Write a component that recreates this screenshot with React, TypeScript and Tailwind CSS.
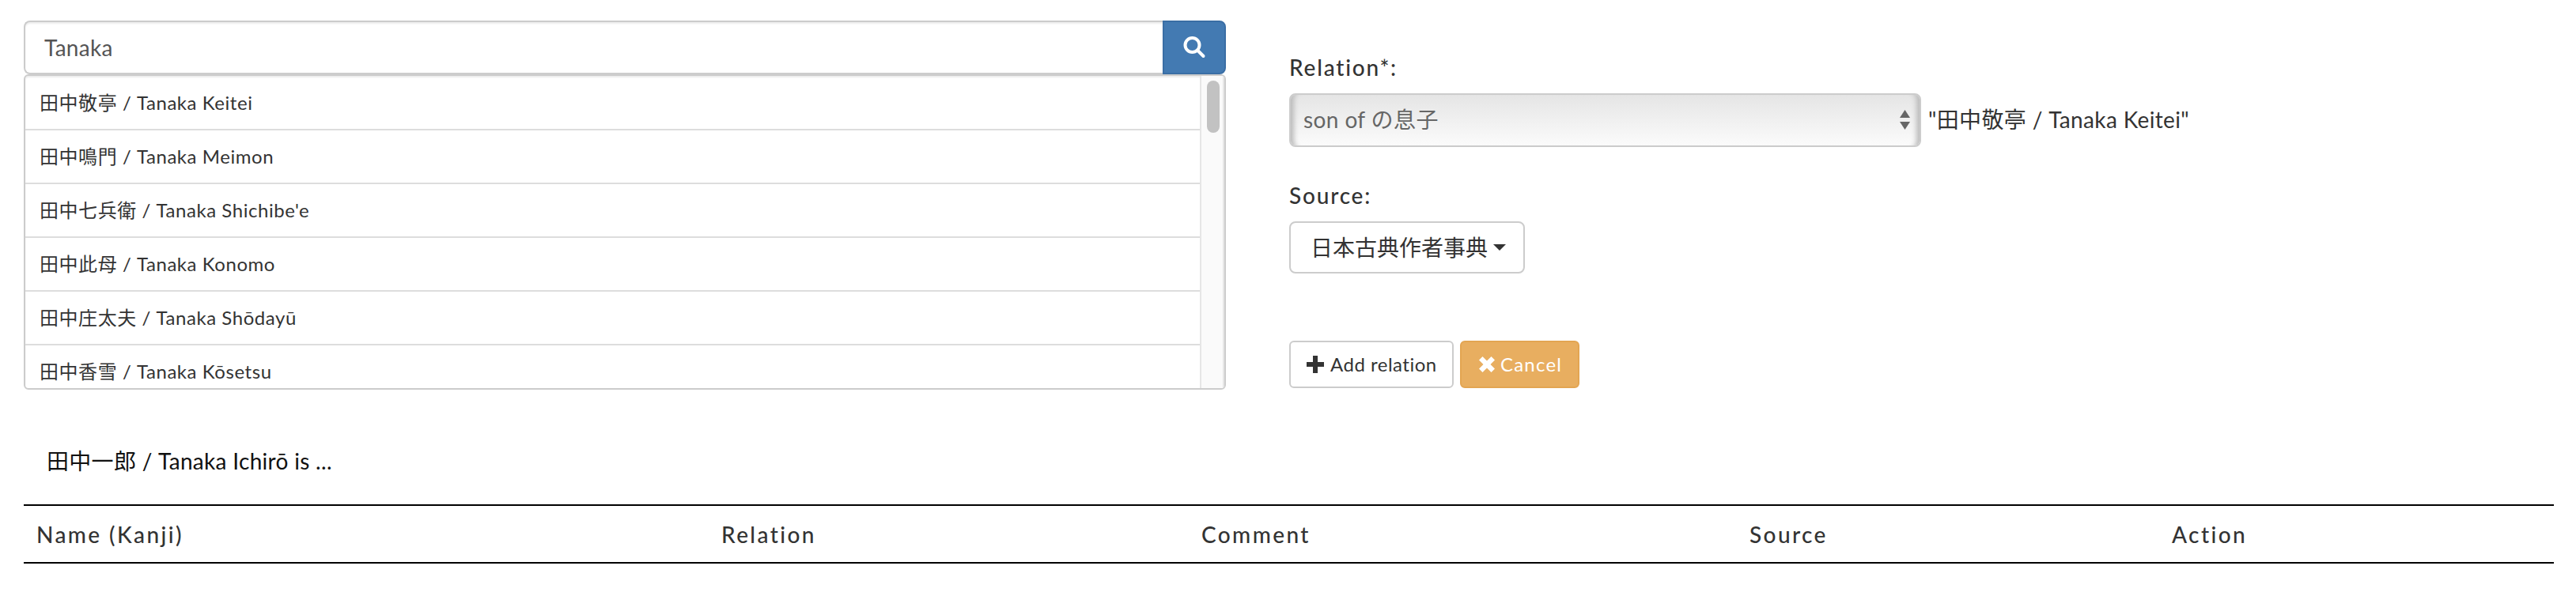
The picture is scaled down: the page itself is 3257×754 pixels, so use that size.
const results = [
  "田中敬亭 / Tanaka Keitei",
  "田中鳴門 / Tanaka Meimon",
  "田中七兵衛 / Tanaka Shichibe'e",
  "田中此母 / Tanaka Konomo",
  "田中庄太夫 / Tanaka Shōdayū",
  "田中香雪 / Tanaka Kōsetsu",
];

const columns = [
  { label: "Name (Kanji)", width: "w-[866px]" },
  { label: "Relation", width: "w-[607px]" },
  { label: "Comment", width: "w-[693px]" },
  { label: "Source", width: "w-[534px]" },
  { label: "Action", width: "w-[499px]" },
];

const SearchIcon = () => (
  <svg width="30" height="30" viewBox="0 0 30 30" fill="none" stroke="white" strokeWidth="4">
    <circle cx="12.5" cy="12" r="9" />
    <path d="M19 18.5L26.5 26" strokeLinecap="round" />
  </svg>
);

const PlusIcon = () => (
  <svg width="22" height="22" viewBox="0 0 22 22" fill="#333">
    <path d="M8 0h6v8h8v6h-8v8H8v-8H0V8h8z" />
  </svg>
);

const CrossIcon = () => (
  <svg width="20" height="20" viewBox="0 0 20 20" fill="white">
    <path d="M4.5 0L10 5.5 15.5 0 20 4.5 14.5 10 20 15.5 15.5 20 10 14.5 4.5 20 0 15.5 5.5 10 0 4.5z" />
  </svg>
);

const SelectArrows = () => (
  <svg width="13" height="25" viewBox="0 0 13 25" fill="#666">
    <path d="M6.5 0L13 10H0z" />
    <path d="M0 15h13L6.5 25z" />
  </svg>
);

const App = () => {
  return (
    <div className="h-[754px] bg-white px-[30px] pt-[26px] font-['Lato','Noto_Sans_CJK_JP',sans-serif] text-[#333]">
      <div className="flex h-[467px] gap-[80px]">
        <div className="w-[1520px] shrink-0">
          <div className="flex h-[68px]">
            <div className="flex flex-1 items-center rounded-l-[8px] border-2 border-r-0 border-[#ccc] pl-[24px] text-[28px] tracking-[0.3px] text-[#555] shadow-[inset_0_2px_2px_rgba(0,0,0,0.08)]">
              Tanaka
            </div>
            <div className="flex w-[80px] items-center justify-center rounded-r-[8px] border-2 border-[#3a6ea5] bg-[#437ab2]">
              <SearchIcon />
            </div>
          </div>
          <div className="flex h-[399px] overflow-hidden rounded-[6px] border-2 border-[#ccc] shadow-[inset_0_2px_2px_rgba(0,0,0,0.08)]">
            <div className="flex-1 overflow-hidden pt-[1px]">
              {results.map((name) => (
                <div
                  key={name}
                  className="flex h-[68px] shrink-0 items-center border-b-2 border-[#ddd] pl-[18px] text-[24px] tracking-[0.55px]"
                >
                  {name}
                </div>
              ))}
            </div>
            <div className="w-[31px] border-x-2 border-l-[#e6e6e6] border-r-[#e6e6e6] bg-[#fafafa] pt-[6px] pl-[7px]">
              <div className="h-[66px] w-[16px] rounded-full bg-[#c2c2c2]" />
            </div>
          </div>
        </div>

        <div className="flex-1 pt-[42px]">
          <div className="text-[28px] leading-[34px] font-medium tracking-[1.8px]">Relation*:</div>
          <div className="mt-[16px] flex items-center">
            <div className="flex h-[68px] w-[799px] items-center justify-between rounded-[8px] border-2 border-[#ccc] bg-linear-to-b from-[#e5e5e5] to-[#fbfbfb] pr-[12px] pb-[2px] pl-[16px] text-[28px] tracking-[0.4px] text-[#666] shadow-[inset_10px_0_6px_-6px_#bbb,inset_-10px_0_6px_-6px_#bbb]">
              <span>son of の息子</span>
              <SelectArrows />
            </div>
            <span className="ml-[9px] pb-[2px] text-[28px] tracking-[0.35px]">"田中敬亭 / Tanaka Keitei"</span>
          </div>
          <div className="mt-[44px] text-[28px] leading-[34px] font-medium tracking-[1.8px]">Source:</div>
          <div className="mt-[16px] flex h-[66px] w-[298px] items-center gap-[7px] rounded-[8px] border-2 border-[#ccc] pl-[25px] text-[28px]">
            <span>日本古典作者事典</span>
            <span className="h-0 w-0 border-x-[8px] border-t-[8px] border-x-transparent border-t-[#333]" />
          </div>
          <div className="mt-[85px] flex gap-[8px]">
            <div className="flex h-[60px] w-[208px] items-center gap-[8px] rounded-[6px] border-2 border-[#ccc] pl-[20px] text-[24px] tracking-[0.5px]">
              <PlusIcon />
              <span>Add relation</span>
            </div>
            <div className="flex h-[60px] w-[151px] items-center gap-[7px] rounded-[6px] border-2 border-[#e3a552] bg-[#e8ae60] pl-[22px] text-[24px] tracking-[1.2px] text-white">
              <CrossIcon />
              <span>Cancel</span>
            </div>
          </div>
        </div>
      </div>

      <div className="mt-[72px] pl-[29px] text-[28px] leading-[36px] tracking-[0.3px] text-[#111]">田中一郎 / Tanaka Ichirō is ...</div>

      <table className="mt-[37px] w-[3199px] table-fixed border-y-2 border-black">
        <thead>
          <tr className="h-[73px]">
            {columns.map((column) => (
              <th key={column.label} className={`${column.width} px-[16px] text-left text-[28px] font-medium tracking-[2.4px]`}>
                {column.label}
              </th>
            ))}
          </tr>
        </thead>
      </table>
    </div>
  );
};

export default App;
